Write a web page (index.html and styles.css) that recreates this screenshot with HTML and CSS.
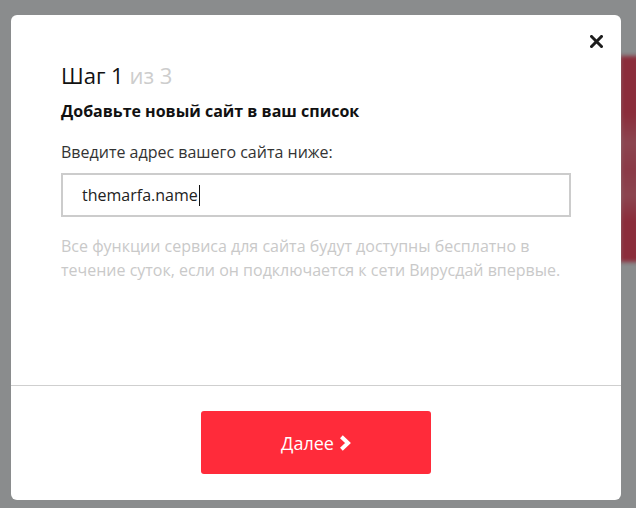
FILE: index.html
```html
<!DOCTYPE html>
<html lang="ru">
<head>
<meta charset="utf-8">
<title>Шаг 1 из 3</title>
<link rel="stylesheet" href="styles.css">
</head>
<body>
<div class="backdrop-strip"></div>
<div class="modal">
  <button class="close" aria-label="Закрыть">
    <svg width="13" height="13" viewBox="0 0 13 13"><path d="M1.5 1.5 L11.5 11.5 M11.5 1.5 L1.5 11.5" stroke="#1d1d1d" stroke-width="3" stroke-linecap="square" fill="none"/></svg>
  </button>
  <div class="modal-body">
    <h2 class="step">Шаг 1 <span class="step-total">из 3</span></h2>
    <h3 class="subtitle">Добавьте новый сайт в ваш список</h3>
    <label class="label" for="site">Введите адрес вашего сайта ниже:</label>
    <div class="input"><span class="input-text">themarfa.name</span><span class="caret"></span></div>
    <p class="hint">Все функции сервиса для сайта будут доступны бесплатно в течение суток, если он подключается к сети Вирусдай впервые.</p>
  </div>
  <div class="modal-footer">
    <button class="next">Далее
      <svg width="12" height="16" viewBox="0 0 12 16"><path d="M2.4 1.8 L9 8 L2.4 14.2" stroke="#fff" stroke-width="4" fill="none" stroke-linejoin="miter"/></svg>
    </button>
  </div>
</div>
</body>
</html>
```
FILE: styles.css
```css
html, body {
  margin: 0;
  padding: 0;
}
body {
  background: #8a8c8d;
  font-family: "Open Sans", "Liberation Sans", sans-serif;
  width: 636px;
  height: 508px;
  overflow: hidden;
  position: relative;
}
.backdrop-strip {
  position: absolute;
  right: -4px;
  top: 56px;
  width: 20px;
  height: 206px;
  background: linear-gradient(to bottom, #8b2d3b 0%, #8b2d3b 28%, #8c4550 42%, #8b3a47 55%, #8c4550 68%, #8b2d3b 80%, #8b2d3b 100%);
  filter: blur(2px);
}
.modal {
  position: relative;
  margin: 15px 0 0 11px;
  width: 610px;
  height: 485px;
  background: #fff;
  border-radius: 6px;
  display: flex;
  flex-direction: column;
}
.close {
  position: absolute;
  top: 20px;
  right: 18px;
  background: none;
  border: 0;
  padding: 0;
  width: 13px;
  height: 13px;
  display: block;
}
.close svg { display: block; }
.modal-body {
  flex: 1;
  padding: 45px 50px 0;
}
.step {
  margin: 0;
  font-size: 22px;
  line-height: 30px;
  font-weight: 400;
  color: #111;
}
.step-total { color: #cdcdcd; }
.subtitle {
  margin: 10px 0 0;
  font-size: 16px;
  line-height: 22px;
  font-weight: 700;
  color: #111;
}
.label {
  display: block;
  margin-top: 19px;
  font-size: 16px;
  line-height: 22px;
  color: #333;
}
.input {
  margin-top: 10px;
  box-sizing: border-box;
  height: 44px;
  border: 2px solid #cccccc;
  padding: 0 19px;
  display: flex;
  align-items: center;
  font-size: 16px;
  color: #222;
}
.caret {
  display: inline-block;
  width: 1px;
  height: 21px;
  background: #111;
  margin-left: 1px;
}
.hint {
  margin: 17px 0 0;
  font-size: 16px;
  line-height: 24px;
  color: #c9c9c9;
}
.modal-footer {
  border-top: 1px solid #cfcfcf;
  height: 115px;
  display: flex;
  justify-content: center;
  padding-top: 25px;
  box-sizing: border-box;
}
.next {
  width: 230px;
  height: 63px;
  background: #ff2b3a;
  border: 0;
  border-radius: 3px;
  color: #fff;
  font-family: "Open Sans", "Liberation Sans", sans-serif;
  font-size: 18px;
  display: flex;
  align-items: center;
  justify-content: center;
  gap: 5px;
  padding: 0;
}
.next svg { display: block; margin-top: 1px; }
```
